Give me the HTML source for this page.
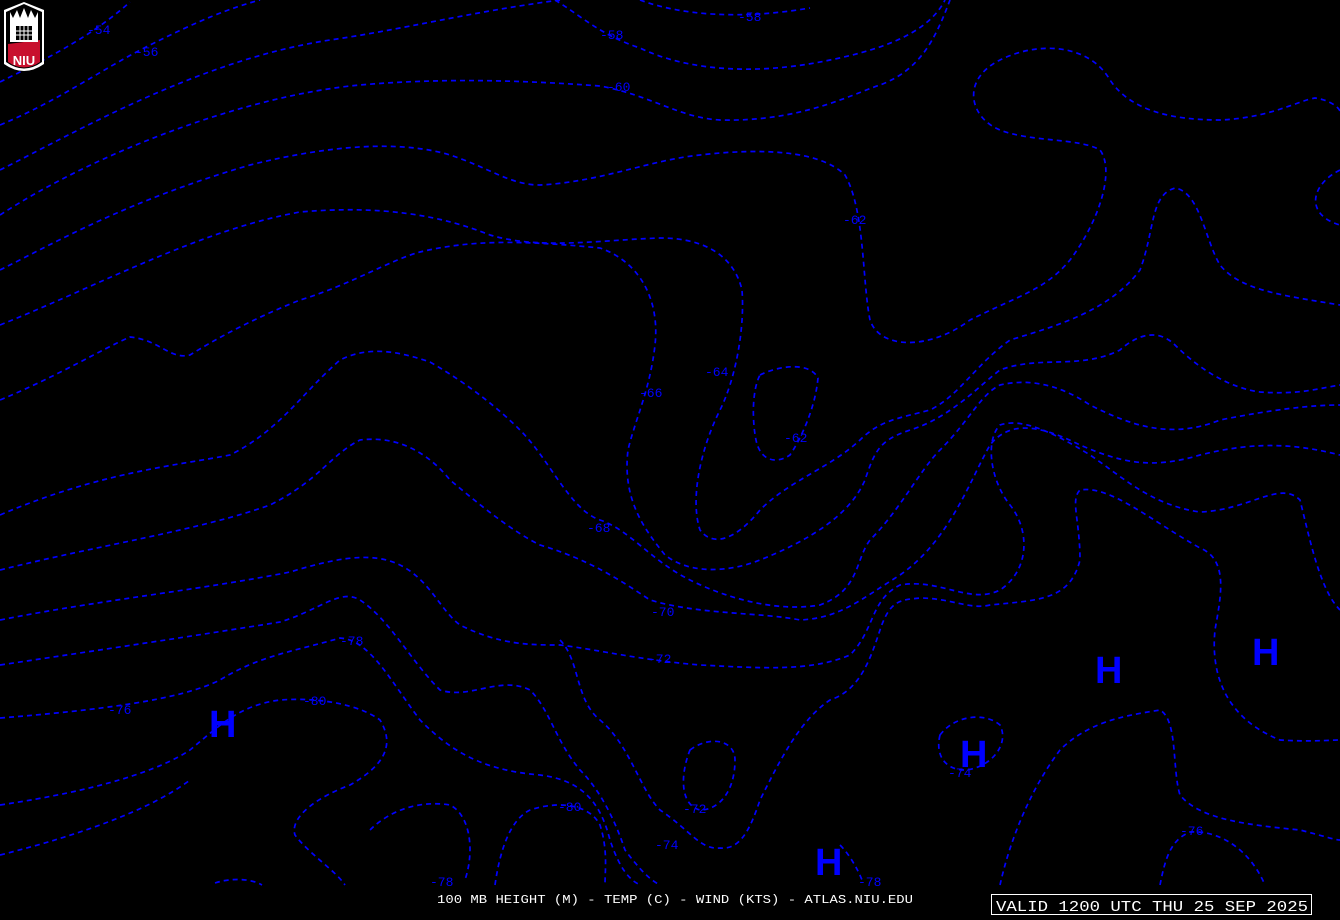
<!DOCTYPE html>
<html><head><meta charset="utf-8"><style>
html,body{margin:0;padding:0;background:#000;width:1340px;height:920px;overflow:hidden}
svg{display:block}
.c{fill:none;stroke:#0000ff;stroke-width:1.7;stroke-dasharray:5 4}
.l{fill:#0000ff;font:13px "Liberation Mono",monospace}
.h{fill:#0000ff;font:bold 38px "Liberation Sans",sans-serif}
</style></head><body>
<svg width="1340" height="920" viewBox="0 0 1340 920" xmlns="http://www.w3.org/2000/svg">
<rect width="1340" height="920" fill="#000"/>
<g class="c">
<path d="M0,82 C40,62 90,38 130,2"/>
<path d="M0,125 C60,100 100,70 150,45 C200,20 230,8 260,0"/>
<path d="M0,170 C80,130 200,60 330,40 C400,30 470,12 560,0"/>
<path d="M555,0 C580,15 600,35 640,48 C690,72 760,75 830,60 C890,48 930,30 945,0"/>
<path d="M640,0 C680,15 740,20 810,8"/>
<path d="M0,215 C100,150 250,95 360,85 C440,78 520,80 600,86 C650,95 680,118 720,120 C800,122 850,95 880,85 C920,70 935,40 950,0"/>
<path d="M0,270 C60,240 130,200 250,165 C330,145 400,140 450,155 C490,168 510,185 540,185 C600,182 650,160 700,155 C760,148 820,150 845,175 C865,210 862,280 870,320 C880,350 930,350 970,320 C1020,295 1045,290 1070,260 C1100,220 1115,170 1100,150 C1080,138 1030,142 1000,130 C970,118 960,80 1000,60 C1040,40 1090,45 1110,80 C1130,110 1170,120 1220,120 C1270,118 1300,100 1315,98 C1330,100 1340,108 1340,112"/>
<path d="M1340,170 C1310,185 1305,215 1340,225"/>
<path d="M0,325 C100,285 200,230 300,212 C380,205 440,215 490,235 C540,250 600,240 660,238 C710,238 735,260 742,290 C745,330 735,380 720,410 C700,450 690,500 700,530 C715,550 740,535 760,510 C790,480 830,468 860,440 C880,420 900,418 930,410 C960,395 975,365 1010,340 C1060,325 1110,310 1140,270 C1155,230 1150,195 1175,188 C1200,192 1205,240 1220,265 C1240,290 1280,295 1340,305"/>
<path d="M0,400 C60,375 100,350 130,337 C160,340 170,360 190,355 C230,330 270,312 300,300 C350,285 390,260 420,252 C470,240 520,240 600,248 C640,262 660,300 655,345 C650,390 635,420 628,450 C622,500 645,530 665,555 C690,575 730,572 760,560 C810,540 850,515 865,480 C875,450 880,440 910,430 C950,418 980,385 1000,370 C1040,355 1080,370 1120,350 C1140,332 1160,330 1175,345 C1200,370 1230,388 1260,392 C1300,395 1320,388 1340,385"/>
<path d="M760,375 C780,365 810,362 818,378 C815,410 800,440 790,455 C775,465 760,460 756,440 C752,420 752,390 760,375 Z"/>
<path d="M0,515 C100,472 180,465 230,455 C280,430 300,395 340,360 C370,345 400,352 430,362 C470,385 500,410 520,430 C550,460 570,510 600,520 C630,530 650,560 690,580 C730,600 780,612 820,605 C860,590 855,560 870,540 C900,510 920,470 940,450 C970,420 980,395 1000,385 C1030,378 1060,385 1090,405 C1130,425 1170,440 1220,420 C1270,410 1310,405 1340,405"/>
<path d="M0,570 C100,545 200,530 270,505 C320,480 330,455 360,440 C400,435 430,455 450,480 C480,505 510,530 540,545 C590,560 620,580 650,600 C700,615 760,612 800,620 C840,618 860,600 900,575 C950,540 970,480 990,445 C1010,420 1040,425 1080,445 C1120,462 1150,470 1200,455 C1260,440 1300,445 1340,455"/>
<path d="M0,620 C100,600 200,590 290,572 C330,560 370,550 400,565 C430,580 440,610 460,625 C500,645 530,645 560,645 C600,650 640,660 700,665 C760,668 810,672 850,655 C875,630 870,600 900,585 C940,578 970,605 1000,590 C1030,570 1030,530 1010,505 C990,480 985,440 1000,425 C1020,418 1050,430 1090,455 C1120,475 1150,505 1200,512 C1250,510 1280,480 1300,500 C1310,540 1320,590 1340,610"/>
<path d="M0,665 C100,650 200,635 280,622 C320,610 340,588 360,600 C390,620 410,660 440,690 C470,700 500,675 530,690 C550,710 555,740 580,770 C600,790 615,820 625,850 C640,870 650,880 660,885"/>
<path d="M690,750 C710,735 735,740 735,760 C735,790 720,810 700,810 C680,805 680,775 690,750 Z"/>
<path d="M560,640 C580,660 575,700 600,720 C630,745 640,790 660,810 C690,830 700,850 720,848 C740,850 750,830 760,800 C780,760 800,720 830,700 C860,690 870,660 880,630 C890,600 900,600 920,598 C950,598 970,610 990,605 C1040,600 1070,600 1080,560 C1080,520 1070,500 1080,490 C1110,485 1150,520 1200,548 C1230,560 1220,600 1215,630 C1210,680 1230,720 1280,740 C1310,742 1330,740 1340,740"/>
<path d="M0,718 C100,710 180,700 220,680 C260,655 300,650 340,638 C370,640 390,680 420,720 C450,750 480,770 540,775 C580,780 600,800 610,840 C620,870 630,880 640,885"/>
<path d="M0,805 C100,790 160,770 190,750 C220,725 240,705 280,700 C320,697 360,705 380,720 C395,745 385,765 350,785 C310,800 290,820 295,835 C310,855 335,870 345,885"/>
<path d="M0,855 C80,835 150,810 190,780"/>
<path d="M370,830 C390,810 420,800 450,805 C470,815 475,850 465,880"/>
<path d="M495,885 C500,850 510,820 530,810 C560,800 590,805 600,825 C608,850 605,870 605,885"/>
<path d="M215,883 C230,878 250,878 262,885"/>
<path d="M940,735 C955,715 985,712 1000,725 C1010,745 990,768 965,770 C945,770 935,755 940,735 Z"/>
<path d="M1000,885 C1010,840 1030,790 1060,750 C1090,720 1130,715 1160,710 C1178,720 1172,770 1180,795 C1200,820 1250,825 1300,830 C1320,835 1335,840 1340,840"/>
<path d="M1160,885 C1165,860 1170,840 1190,832 C1220,830 1250,850 1265,885"/>
<path d="M840,845 C850,855 858,870 862,880"/>
</g>
<g class="l">
<text x="87" y="34">-54</text><text x="135" y="56">-56</text>
<text x="600" y="39">-58</text><text x="738" y="21">-58</text>
<text x="607" y="91">-60</text><text x="843" y="224">-62</text>
<text x="705" y="376">-64</text><text x="639" y="397">-66</text>
<text x="784" y="442">-62</text><text x="587" y="532">-68</text>
<text x="651" y="616">-70</text><text x="648" y="663">-72</text>
<text x="340" y="645">-78</text><text x="108" y="714">-76</text>
<text x="303" y="705">-80</text><text x="558" y="811">-80</text>
<text x="683" y="813">-72</text><text x="655" y="849">-74</text>
<text x="948" y="777">-74</text><text x="1180" y="835">-76</text>
<text x="430" y="886">-78</text><text x="858" y="886">-78</text>
</g>
<g class="h">
<text x="209" y="737">H</text><text x="815" y="875">H</text>
<text x="960" y="767">H</text><text x="1095" y="683">H</text>
<text x="1252" y="665">H</text>
</g>
<path d="M4,10 L24,2 L44,10 L44,64 Q24,78 4,64 Z" fill="#fff"/>
<path d="M6,12 L24,4 L42,12 L42,62 Q24,75 6,62 Z" fill="#000"/>
<path d="M8,44 L40,40 L40,62 Q24,73 8,62 Z" fill="#c8102e"/>
<rect x="10" y="22" width="28" height="20" fill="#fff"/>
<path d="M10,22 L10,12 L13,18 L17,10 L20,18 L24,8 L28,18 L31,10 L35,18 L38,12 L38,22 Z" fill="#fff"/>
<rect x="16" y="26" width="16" height="14" fill="#000"/>
<g stroke="#fff" stroke-width="1"><line x1="20" y1="26" x2="20" y2="40"/><line x1="24" y1="26" x2="24" y2="40"/><line x1="28" y1="26" x2="28" y2="40"/><line x1="16" y1="31" x2="32" y2="31"/><line x1="16" y1="35" x2="32" y2="35"/></g>
<text x="24" y="65" text-anchor="middle" fill="#fff" font-family="Liberation Sans,sans-serif" font-weight="bold" font-size="13">NIU</text>
<text x="437" y="903" fill="#fff" font-family="Liberation Mono,monospace" font-size="11.5" textLength="476" lengthAdjust="spacingAndGlyphs">100 MB HEIGHT (M) - TEMP (C) - WIND (KTS) - ATLAS.NIU.EDU</text>
<rect x="991.5" y="894.5" width="320" height="20" fill="none" stroke="#fff" stroke-width="1"/>
<text x="996" y="911" fill="#fff" font-family="Liberation Mono,monospace" font-size="15" textLength="312" lengthAdjust="spacingAndGlyphs">VALID 1200 UTC THU 25 SEP 2025</text>
</svg>
</body></html>
